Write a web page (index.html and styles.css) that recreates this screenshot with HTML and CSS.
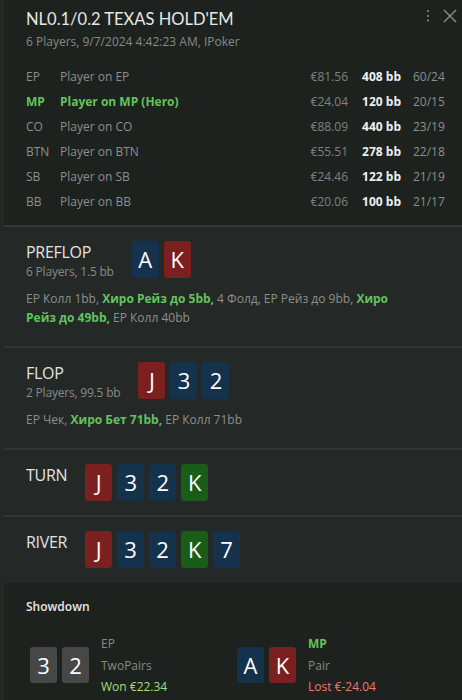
FILE: index.html
```html
<!DOCTYPE html>
<html lang="en">
<head>
<meta charset="utf-8">
<title>Hand</title>
<link rel="stylesheet" href="styles.css">
</head>
<body>
<div class="top">
  <div class="header">
    <div class="title">NL0.1/0.2 TEXAS HOLD'EM</div>
    <div class="tools">
      <svg class="kebab" width="4" height="14" viewBox="0 0 4 14"><circle cx="2" cy="2" r="1.1"/><circle cx="2" cy="7" r="1.1"/><circle cx="2" cy="11.5" r="1.1"/></svg>
      <svg class="close" width="14" height="14" viewBox="0 0 14 14"><path d="M1 1 L13 13 M13 1 L1 13"/></svg>
    </div>
  </div>
  <div class="sub">6 Players, 9/7/2024 4:42:23 AM, IPoker</div>
  <div class="players">
    <div class="row"><span>EP</span><span>Player on EP</span><span class="amt">€81.56</span><span class="bb">408 bb</span><span class="st">60/24</span></div>
    <div class="row hero"><span class="pos">MP</span><span class="pn">Player on MP (Hero)</span><span class="amt">€24.04</span><span class="bb">120 bb</span><span class="st">20/15</span></div>
    <div class="row"><span>CO</span><span>Player on CO</span><span class="amt">€88.09</span><span class="bb">440 bb</span><span class="st">23/19</span></div>
    <div class="row"><span>BTN</span><span>Player on BTN</span><span class="amt">€55.51</span><span class="bb">278 bb</span><span class="st">22/18</span></div>
    <div class="row"><span>SB</span><span>Player on SB</span><span class="amt">€24.46</span><span class="bb">122 bb</span><span class="st">21/19</span></div>
    <div class="row"><span>BB</span><span>Player on BB</span><span class="amt">€20.06</span><span class="bb">100 bb</span><span class="st">21/17</span></div>
  </div>
</div>

<section class="street">
  <div class="head">
    <div class="label">
      <div class="name">PREFLOP</div>
      <div class="info">6 Players, 1.5 bb</div>
    </div>
    <div class="cards"><span class="card b">A</span><span class="card r">K</span></div>
  </div>
  <div class="actions">EP Колл 1bb, <b>Хиро Рейз до 5bb,</b> 4 Фолд, EP Рейз до 9bb, <b>Хиро Рейз до 49bb,</b> EP Колл 40bb</div>
</section>

<section class="street">
  <div class="head">
    <div class="label">
      <div class="name">FLOP</div>
      <div class="info">2 Players, 99.5 bb</div>
    </div>
    <div class="cards"><span class="card r">J</span><span class="card b">3</span><span class="card b">2</span></div>
  </div>
  <div class="actions">EP Чек, <b>Хиро Бет 71bb,</b> EP Колл 71bb</div>
</section>

<section class="street short">
  <div class="head">
    <div class="label"><div class="name">TURN</div></div>
    <div class="cards"><span class="card r">J</span><span class="card b">3</span><span class="card b">2</span><span class="card g">K</span></div>
  </div>
</section>

<section class="street short last">
  <div class="head">
    <div class="label"><div class="name">RIVER</div></div>
    <div class="cards"><span class="card r">J</span><span class="card b">3</span><span class="card b">2</span><span class="card g">K</span><span class="card b">7</span></div>
  </div>
</section>

<div class="showdown">
  <div class="sd-title">Showdown</div>
  <div class="hands">
    <div class="hand">
      <div class="cards"><span class="card n">3</span><span class="card n">2</span></div>
      <div class="hinfo">
        <div>EP</div>
        <div>TwoPairs</div>
        <div class="won">Won €22.34</div>
      </div>
    </div>
    <div class="hand">
      <div class="cards"><span class="card b">A</span><span class="card r">K</span></div>
      <div class="hinfo">
        <div class="me">MP</div>
        <div>Pair</div>
        <div class="lost">Lost €-24.04</div>
      </div>
    </div>
  </div>
</div>
</body>
</html>
```

FILE: styles.css
```css
* { box-sizing: border-box; }
html, body { margin: 0; padding: 0; }
body {
  background: #242927;
  font-family: "Open Sans", "Noto Sans", sans-serif;
  font-size: 12px;
  color: #8b908d;
  width: 462px;
  overflow: hidden;
}

.top {
  margin-left: 4px;
  background: #1d221f;
  border-bottom: 2px solid #353a38;
  padding: 8px 0 11px 22px;
}
.header {
  display: flex;
  justify-content: space-between;
  align-items: flex-start;
}
.title {
  font-family: "Lato", "Open Sans", sans-serif;
  font-size: 16.5px;
  line-height: 22px;
  color: #e6e8e7;
}
.tools {
  display: flex;
  align-items: center;
  gap: 13px;
  padding-right: 5px;
  padding-top: 1px;
}
.kebab circle { fill: #858a87; }
.close path { stroke: #8e9390; stroke-width: 1.3; fill: none; }
.sub {
  margin-top: 3px;
  line-height: 18px;
  color: #868b88;
}
.players { margin-top: 13px; }
.row {
  display: grid;
  grid-template-columns: 34px 1fr auto 53px 61px;
  height: 25px;
  align-items: center;
}
.row .amt { text-align: right; color: #7d827f; }
.row .bb { text-align: right; font-weight: 700; color: #eef0ef; }
.row .st { padding-left: 12px; }
.row.hero .pos, .row.hero .pn { color: #63c25e; font-weight: 700; }

.street {
  margin-left: 4px;
  padding: 14px 22px 19px 22px;
  border-bottom: 2px solid #323735;
}
.street.short { padding-bottom: 14px; }
.street.last { border-bottom: none; padding-bottom: 15px; }
.head {
  display: flex;
  align-items: flex-start;
  gap: 18px;
}
.name {
  font-size: 16px;
  line-height: 22px;
  color: #e2e4e3;
  letter-spacing: -0.3px;
}
.info {
  line-height: 18px;
  color: #868b88;
  letter-spacing: -0.2px;
}
.cards { display: flex; gap: 5px; }
.card {
  width: 27px;
  height: 37px;
  border-radius: 3px;
  color: #fff;
  font-size: 22px;
  line-height: 37px;
  text-align: center;
}
.card.b { background: #15324d; }
.card.r { background: #7b1f1f; }
.card.g { background: #195d19; }
.card.n { background: #474747; }
.actions {
  margin-top: 8px;
  line-height: 19px;
  color: #8b908d;
  padding-right: 24px;
}
.actions b { color: #63c25e; }

.showdown {
  margin-left: 4px;
  background: #1d221f;
  padding: 15px 18px 10px 22px;
  min-height: 130px;
}
.sd-title {
  line-height: 18px;
  color: #e6e8e7;
  font-weight: 600;
}
.hands {
  margin-top: 17px;
  display: grid;
  grid-template-columns: 207px 207px;
  padding-left: 4px;
}
.hand {
  display: flex;
  align-items: center;
  gap: 12px;
}
.hand .cards { gap: 5px; }
.hand .card { height: 36px; line-height: 36px; }
.hinfo { line-height: 21.5px; color: #868b88; }
.hinfo .me { color: #63c25e; font-weight: 700; }
.won { color: #a3df78; }
.lost { color: #ef7a6d; }
```
